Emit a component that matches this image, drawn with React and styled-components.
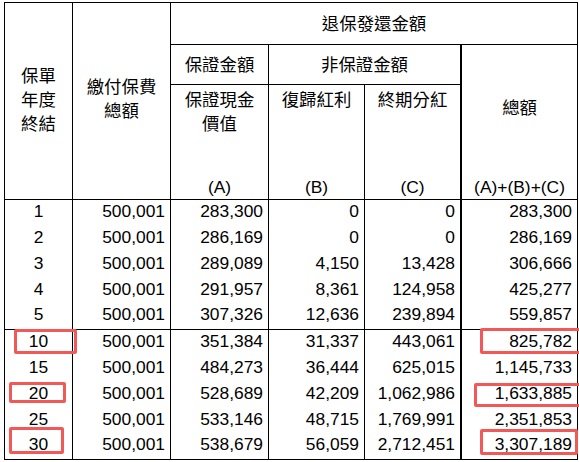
import React from "react";
import styled, { createGlobalStyle } from "styled-components";

const GlobalStyle = createGlobalStyle`
  html, body {
    margin: 0;
    padding: 0;
    background: #fff;
    overflow: hidden;
  }
  body {
    font-family: "Liberation Sans", "Noto Sans CJK TC", Arial, sans-serif;
    color: #000;
  }
`;

const rows = [
  ["1", "500,001", "283,300", "0", "0", "283,300"],
  ["2", "500,001", "286,169", "0", "0", "286,169"],
  ["3", "500,001", "289,089", "4,150", "13,428", "306,666"],
  ["4", "500,001", "291,957", "8,361", "124,958", "425,277"],
  ["5", "500,001", "307,326", "12,636", "239,894", "559,857"],
  ["10", "500,001", "351,384", "31,337", "443,061", "825,782"],
  ["15", "500,001", "484,273", "36,444", "625,015", "1,145,733"],
  ["20", "500,001", "528,689", "42,209", "1,062,986", "1,633,885"],
  ["25", "500,001", "533,146", "48,715", "1,769,991", "2,351,853"],
  ["30", "500,001", "538,679", "56,059", "2,712,451", "3,307,189"],
];

// annotation boxes drawn over the sheet
const marks = [
  { x: 14, y: 329, w: 63, h: 25 },
  { x: 9, y: 382, w: 57, h: 21 },
  { x: 9, y: 427, w: 55, h: 27 },
  { x: 480, y: 328, w: 110, h: 26 },
  { x: 474, y: 383, w: 116, h: 24 },
  { x: 480, y: 429, w: 98, h: 26 },
];

const colWidths = [68, 98, 98, 96, 97, 116];

export default function App() {
  return (
    <Page>
      <GlobalStyle />
      <Sheet>
        <colgroup>
          {colWidths.map((w, i) => (
            <col key={i} width={w} />
          ))}
        </colgroup>
        <thead>
          <HeadRow $h={42}>
            <HeadCell rowSpan={3} $pb={2}>
              保單
              <br />
              年度
              <br />
              終結
            </HeadCell>
            <HeadCell rowSpan={3} $pb={4}>
              繳付保費
              <br />
              總額
            </HeadCell>
            <HeadCell colSpan={4}>退保發還金額</HeadCell>
          </HeadRow>
          <HeadRow $h={40}>
            <HeadCell>保證金額</HeadCell>
            <HeadCell colSpan={2} $thick>
              非保證金額
            </HeadCell>
            <HeadCell rowSpan={2}>
              <Stack $h={154} $top={51}>
                <span>總額</span>
                <span>(A)+(B)+(C)</span>
              </Stack>
            </HeadCell>
          </HeadRow>
          <HeadRow $h={115}>
            <HeadCell>
              <Stack $h={114} $top={3}>
                <span>
                  保證現金
                  <br />
                  價值
                </span>
                <span>(A)</span>
              </Stack>
            </HeadCell>
            <HeadCell>
              <Stack $h={114} $top={3}>
                <span>復歸紅利</span>
                <span>(B)</span>
              </Stack>
            </HeadCell>
            <HeadCell $thick>
              <Stack $h={114} $top={3}>
                <span>終期分紅</span>
                <span>(C)</span>
              </Stack>
            </HeadCell>
          </HeadRow>
        </thead>
        <tbody>
          {rows.map((r, i) => {
            const edge = i === 4 || i === 9;
            return (
              <BodyRow key={r[0]}>
                {r.map((v, j) => (
                  <Cell key={j} $center={j === 0} $thick={j === 4} $edge={edge}>
                    {v}
                  </Cell>
                ))}
              </BodyRow>
            );
          })}
        </tbody>
      </Sheet>
      {marks.map((m, i) => (
        <Mark key={i} $x={m.x} $y={m.y} $w={m.w} $h={m.h} />
      ))}
    </Page>
  );
}

const Page = styled.div`
  position: relative;
  width: 579px;
  height: 462px;
  padding: 2px 0 0 4px;
  box-sizing: border-box;
  overflow: hidden;
`;

const Sheet = styled.table`
  width: 574px;
  table-layout: fixed;
  border-collapse: separate;
  border-spacing: 0;
  border-left: 1px solid #000;
  border-top: 1px solid #000;
  font-size: 17.4px;
`;

const HeadRow = styled.tr`
  height: ${(p) => p.$h}px;
`;

const HeadCell = styled.th`
  padding: 0 0 ${(p) => p.$pb || 0}px;
  font-weight: normal;
  line-height: 24px;
  text-align: center;
  vertical-align: middle;
  white-space: nowrap;
  border-right: ${(p) => (p.$thick ? 2 : 1)}px solid #000;
  border-bottom: 1px solid #000;
`;

const Stack = styled.div`
  height: ${(p) => p.$h}px;
  padding-top: ${(p) => p.$top}px;
  box-sizing: border-box;
  display: flex;
  flex-direction: column;
  justify-content: space-between;
  align-items: center;
`;

const BodyRow = styled.tr`
  height: 26px;
`;

const Cell = styled.td`
  padding: 0 ${(p) => (p.$center ? 0 : 5)}px 4px 0;
  line-height: 21px;
  text-align: ${(p) => (p.$center ? "center" : "right")};
  vertical-align: middle;
  white-space: nowrap;
  border-right: ${(p) => (p.$thick ? 2 : 1)}px solid #000;
  border-bottom: ${(p) => (p.$edge ? "1px solid #000" : "none")};
`;

const Mark = styled.span`
  position: absolute;
  left: ${(p) => p.$x}px;
  top: ${(p) => p.$y}px;
  width: ${(p) => p.$w}px;
  height: ${(p) => p.$h}px;
  box-sizing: border-box;
  border: 3px solid #f25858;
  border-radius: 2px;
  pointer-events: none;
`;
